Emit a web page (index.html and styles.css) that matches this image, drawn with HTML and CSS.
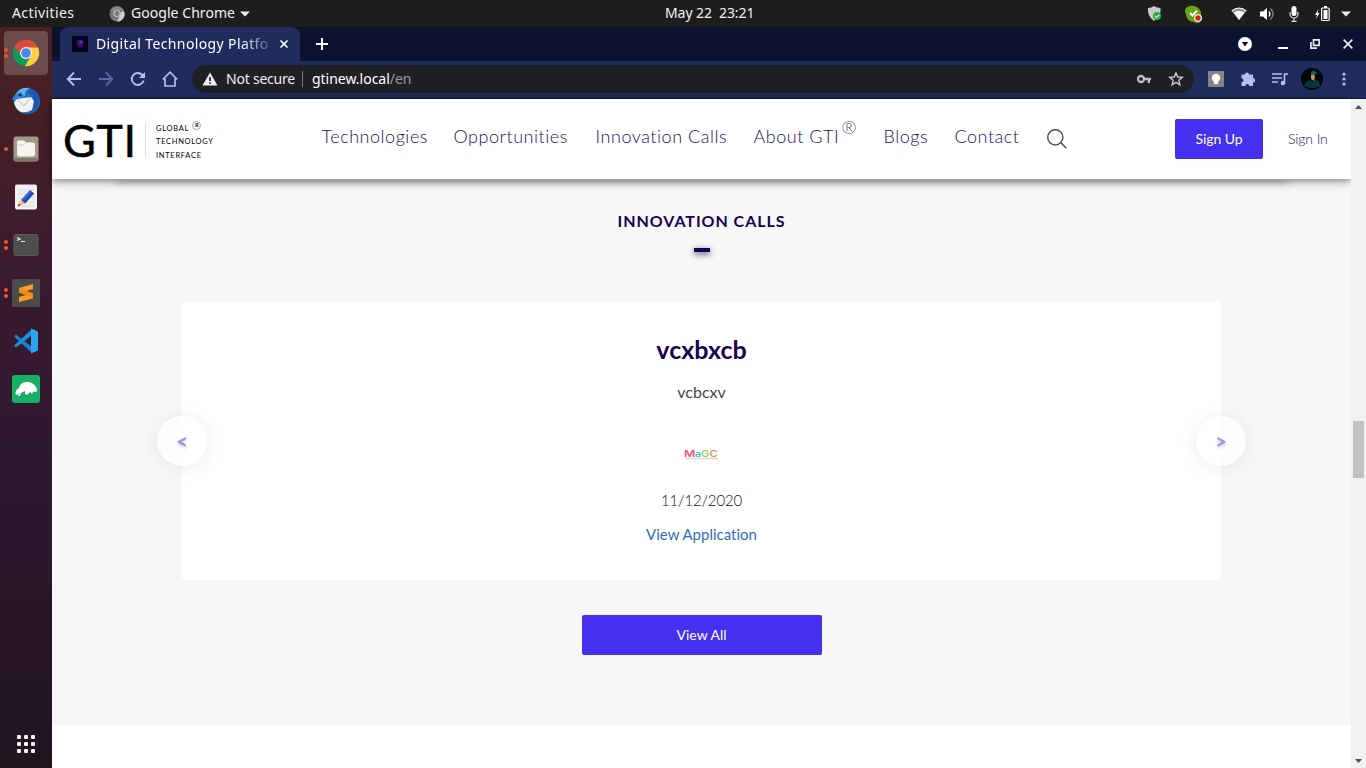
FILE: index.html
```html
<!DOCTYPE html>
<html lang="en">
<head>
<meta charset="utf-8">
<title>Digital Technology Platform</title>
<link rel="stylesheet" href="styles.css">
</head>
<body>
<div class="desktop">
  <header class="topbar">
    <span class="activities">Activities</span>
    <svg class="app-icon" width="16" height="16" viewBox="0 0 16 16"><circle cx="8" cy="8" r="7.500" fill="#777"/><path d="M8 8 15 5A7.500 7.500 0 0 1 8 15.500L11 9z" fill="#d0d0d0"/><path d="M1 5A7.500 7.500 0 0 1 15 5H8z" fill="#858585"/><circle cx="8" cy="7.500" r="3.600" fill="#bbb"/><circle cx="8" cy="7.500" r="2.400" fill="#777"/></svg>
    <span class="app-name">Google Chrome</span>
    <svg class="app-caret" width="10" height="6" viewBox="0 0 10 6"><path d="M0 .5h10L5 5.500z" fill="#eee"/></svg>
    <span class="clock">May 22&nbsp; 23:21</span>
    <div class="tray">
      <svg width="16" height="18" viewBox="0 0 16 18"><path d="M7 1q3 2 6.500 2 1 8-6.500 13Q0 11 1 3q3 0 6-2z" fill="#c9c9c9"/><circle cx="10" cy="11" r="4" fill="#2cae4a"/><path d="m8 11 1.500 1.500L12.300 10" fill="none" stroke="#d6f4dc" stroke-width="1.100"/></svg>
      <svg class="tray-skype" width="18" height="18" viewBox="0 0 18 18"><path d="M5 1q2-.8 4 0a8 8 0 0 1 7 9 5 5 0 0 1-7 7A8 8 0 0 1 1 9a5 5 0 0 1 4-8z" fill="#66a314"/><path d="m5 8 2.500 2.500L12 5.500" fill="none" stroke="#fff" stroke-width="2"/><circle cx="13" cy="13" r="3.800" fill="#fff"/><circle cx="13" cy="13" r="2.700" fill="#e01b24"/></svg>
      <svg class="tray-wifi" width="16" height="14" viewBox="0 0 16 14"><path d="M.5 4Q8-2.500 15.500 4L8 13z" fill="#888"/><path d="M2.500 5.500Q8 2 13.500 5.500L8 13z" fill="#fff"/><path d="M.8 4Q8-2 15.200 4" fill="none" stroke="#fff" stroke-width="1.200"/></svg>
      <svg class="tray-sound" width="16" height="14" viewBox="0 0 16 14"><path d="M1 4.500h3L8 1v12L4 9.500H1z" fill="#fff"/><path d="M10 4.500q2 2.500 0 5" fill="none" stroke="#fff" stroke-width="1.300"/><path d="M11.500 1.500q5 5.500 0 11" fill="none" stroke="#888" stroke-width="1.300"/></svg>
      <svg class="tray-mic" width="10" height="16" viewBox="0 0 10 16"><rect x="2.500" y="0" width="5" height="10" rx="2.500" fill="#fff"/><path d="M1 6v2a4 4 0 0 0 8 0V6M5 12v3M2.500 15.300h5" fill="none" stroke="#ddd" stroke-width="1.200"/></svg>
      <svg class="tray-battery" width="16" height="16" viewBox="0 0 16 16"><path d="M3.500 3 0 9h2l-1 4 3.500-6h-2z" fill="#fff"/><rect x="6.600" y="2" width="7.600" height="12.500" rx="1" fill="none" stroke="#fff" stroke-width="1.200"/><path d="M8.500 4h4v9h-4zM9 0h3v2H9z" fill="#fff"/></svg>
      <svg width="10" height="6" viewBox="0 0 10 6"><path d="M0 .5h10L5 5.500z" fill="#eee"/></svg>
    </div>
  </header>
  <div class="workspace">
    <aside class="dock">
      <div class="dock-item two"><span class="tile active"><svg width="28" height="28" viewBox="0 0 28 28"><circle cx="14" cy="14" r="13.200" fill="#109d58"/><path d="M2.500 7.500A13.200 13.200 0 0 1 26 8.500L14 9l-4 9z" fill="#dd4b3e"/><path d="M14 8.500h12A13.200 13.200 0 0 1 13 27.200L20 15z" fill="#ffce44"/><circle cx="14" cy="14" r="6" fill="#f4f7fb"/><circle cx="14" cy="14" r="4.800" fill="#4a87ee"/></svg></span></div>
      <div class="dock-item"><span class="tile"><svg width="30" height="30" viewBox="0 0 30 30"><circle cx="16" cy="15" r="13" fill="#1f6fc4"/><path d="M4 9Q9 0 19 2q-6 2-5 8z" fill="#65b7ee"/><path d="M1 14Q3 7 10 6l4 5-7 4z" fill="#2985d8"/><path d="M20 3q10 4 8 13-2 9-11 12 6-5 6-12 0-8-7-9z" fill="#1c57b0"/><path d="m3 16 3-3 14-2 3 4-2 9q-6 3-11 2-6-3-7-10z" fill="#f4f2ee"/><path d="m6 13 7 7 7-9" fill="none" stroke="#bdbcc0"/><circle cx="9" cy="9" r="1.300" fill="#123"/></svg></span></div>
      <div class="dock-item one"><span class="tile"><svg width="28" height="28" viewBox="0 0 28 28"><rect x="1.500" y="1.500" width="25" height="25" rx="2.500" fill="#a39a86"/><path d="M1.500 23h25v1q0 2.500-2.500 2.500H4Q1.500 26.500 1.500 24z" fill="#81796a"/><path d="M5 7q0-1.500 1.500-1.500H12l2 2h7q2 0 2 2v10q0 2-2 2H7q-2 0-2-2z" fill="#f6f4f1"/><path d="M5.500 10h6l2-2" fill="none" stroke="#ccc7bd"/></svg></span></div>
      <div class="dock-item"><span class="tile"><svg width="28" height="28" viewBox="0 0 28 28"><rect x="3" y="1.500" width="22" height="25" rx="2" fill="#f1f1f1"/><path d="M6 7h16M6 11h16M6 15h16M6 19h16M6 23h16" stroke="#dcdcdc"/><path d="m9 17 9-10 4 3.500-9 10z" fill="#2c62d4"/><path d="m11 19 9-10 2 1.500-9 10z" fill="#1f4aa8"/><path d="m5.500 23.500 3.500-6.500 4 3.500z" fill="#efb484"/><path d="M5.500 23.500 7 21l1.500 1z" fill="#222"/></svg></span></div>
      <div class="dock-item two"><span class="tile"><svg width="28" height="28" viewBox="0 0 28 28"><rect x="2" y="3.500" width="24" height="21" rx="2" fill="#4d4d4d" stroke="#5d5d5d"/><path d="m5 6.500 3 1.500-3 1.500" fill="none" stroke="#eee" stroke-width="1.200"/><path d="M9 10.500h4" stroke="#eee"/></svg></span></div>
      <div class="dock-item two"><span class="tile"><svg width="28" height="28" viewBox="0 0 28 28"><rect width="28" height="28" rx="1.500" fill="#4b4b4a"/><path d="m7 9 14-4v5l-7 2.300 7 2.200v5L7 23v-5l7-2-7-2.500z" fill="#ff9c1f"/><path d="m7 9 14 5.500v4L7 13.500z" fill="#f28a19"/></svg></span></div>
      <div class="dock-item"><span class="tile"><svg width="28" height="28" viewBox="0 0 28 28"><path d="m2 9.500 2-2L20 20v6z" fill="#1584d0"/><path d="m2 18.500 2 2L20 8V2z" fill="#1b8fd8"/><path d="m19 1.500 7 3v19l-7 3z" fill="#2ba6ee"/></svg></span></div>
      <div class="dock-item"><span class="tile"><svg width="28" height="28" viewBox="0 0 28 28"><rect width="28" height="28" rx="3" fill="#17ae65"/><path d="M3.500 19Q3 15 7 13q1-6 8-6 6 0 9 5 2 4 0 5-2-1-3 0l-1 2-2-2-3 3-2-1v-3l-4 2-1 3H6l1-3-2 2z" fill="#fff"/></svg></span></div>
      <svg class="apps-grid" width="20" height="20" viewBox="0 0 20 20" fill="#f2f2f2"><rect x="1" y="1" width="4" height="4" rx="1"/><rect x="8" y="1" width="4" height="4" rx="1"/><rect x="15" y="1" width="4" height="4" rx="1"/><rect x="1" y="8" width="4" height="4" rx="1"/><rect x="8" y="8" width="4" height="4" rx="1"/><rect x="15" y="8" width="4" height="4" rx="1"/><rect x="1" y="15" width="4" height="4" rx="1"/><rect x="8" y="15" width="4" height="4" rx="1"/><rect x="15" y="15" width="4" height="4" rx="1"/></svg>
    </aside>
    <main class="browser">
      <div class="tabstrip">
        <div class="tab">
          <svg width="16" height="16" viewBox="0 0 16 16"><rect width="16" height="16" fill="#09001c"/><path d="M5 5q3-3 6 0 2 4-3 7-4-3-3-7z" fill="#30126e"/><circle cx="9" cy="6" r="1.800" fill="#5b25a5"/></svg>
          <span class="tab-title">Digital Technology Platfo</span>
          <svg class="tab-close" width="10" height="10" viewBox="0 0 10 10"><path d="m1.500 1.500 7 7m0-7-7 7" stroke="#fff" stroke-width="1.700"/></svg>
        </div>
        <svg class="new-tab" width="12" height="12" viewBox="0 0 12 12"><path d="M6 0v12M0 6h12" stroke="#fff" stroke-width="2"/></svg>
        <div class="window-controls">
          <svg width="14" height="14" viewBox="0 0 14 14"><circle cx="7" cy="7" r="7" fill="#fff"/><path d="M3.800 5h6.400L7 9.500z" fill="#0b1230"/></svg>
          <svg class="win-min" width="10" height="10" viewBox="0 0 10 10"><path d="M0 9h10" stroke="#fff" stroke-width="2"/></svg>
          <svg class="win-restore" width="10" height="10" viewBox="0 0 10 10" fill="none" stroke="#e8ebf5" stroke-width="1.700"><path d="M3.500.9h5.600v5.400H3.500zM.9 3v6.100H7"/></svg>
          <svg class="win-close" width="10" height="10" viewBox="0 0 10 10"><path d="m.7.700 8.600 8.600m0-8.600L.7 9.300" stroke="#e8ebf5" stroke-width="1.700"/></svg>
        </div>
      </div>
      <div class="toolbar">
        <div class="nav-buttons">
          <svg width="16" height="16" viewBox="0 0 16 16" fill="none" stroke="#b3c1ee" stroke-width="1.800"><path d="M15 8H2M8 1.500 1.700 8 8 14.500"/></svg>
          <svg width="16" height="16" viewBox="0 0 16 16" fill="none" stroke="#586a9f" stroke-width="1.800"><path d="M1 8h13M8 1.500 14.300 8 8 14.500"/></svg>
          <svg width="16" height="16" viewBox="0 0 16 16"><path d="M13.600 9.500A6 6 0 1 1 12.300 4L14 5.700" fill="none" stroke="#b3c1ee" stroke-width="1.900"/><path d="M15 1v6H9z" fill="#b3c1ee"/></svg>
          <svg width="16" height="16" viewBox="0 0 16 16" fill="none" stroke="#b3c1ee" stroke-width="1.700"><path d="M.8 8.500 8 1.200l7.200 7.300M3 7.500V15h10V7.500"/></svg>
        </div>
        <div class="omnibox">
          <svg width="16" height="14" viewBox="0 0 16 14"><path d="M8 .5 15.500 13.500H.5z" fill="#eee"/><path d="M8 5v4M8 10.300v1.500" stroke="#202024" stroke-width="1.700"/></svg>
          <span class="not-secure">Not secure</span>
          <span class="divider"></span>
          <span class="url">gtinew.local<span class="url-path">/en</span></span>
          <div class="omnibox-icons">
            <svg width="16" height="10" viewBox="0 0 16 10"><circle cx="5" cy="5" r="3" fill="none" stroke="#bdbdbd" stroke-width="2.300"/><path d="M8 5h7M12.800 5v4" stroke="#bdbdbd" stroke-width="2.400"/></svg>
            <svg width="16" height="16" viewBox="0 0 16 16"><path d="m8 2 1.800 4 4.500.4-3.400 2.900 1 4.400L8 11.400l-3.900 2.300 1-4.400L1.700 6.400 6.200 6z" fill="none" stroke="#ccc" stroke-width="1.400"/></svg>
          </div>
        </div>
        <div class="extensions">
          <svg width="16" height="16" viewBox="0 0 16 16"><rect width="16" height="16" rx="1" fill="#858585"/><circle cx="8" cy="7" r="4.200" fill="#fff"/><path d="M6 10h4v3H6z" fill="#fff"/></svg>
          <svg width="16" height="16" viewBox="0 0 16 16"><path d="M5 3.500a2 2 0 0 1 4 0h4V7a2.200 2.200 0 0 1 0 4.400V15H9.300a2 2 0 0 0-4 0H1.500v-3.800a2 2 0 0 0 0-4V3.500z" fill="#b3c1ee"/></svg>
          <svg width="16" height="14" viewBox="0 0 16 14"><path d="M0 2h10M0 6h10M0 10h6" stroke="#b3c1ee" stroke-width="1.600"/><path d="M12.500 11V2H16" fill="none" stroke="#b3c1ee" stroke-width="1.600"/><circle cx="11" cy="11" r="2.300" fill="#b3c1ee"/></svg>
          <svg class="avatar" width="22" height="22" viewBox="0 0 22 22"><circle cx="11" cy="11" r="11" fill="#030405"/><path d="M3 18q1-5 6-6l3 2 2-3q5 2 5 7-7 4-16 0z" fill="#07353a"/><path d="m10 7 3-1 1 3-1 4-3-2z" fill="#d98a58"/><path d="M10 6q0-4 4-3l2 3-6 1z" fill="#07666e"/></svg>
          <svg width="4" height="14" viewBox="0 0 4 14" fill="#b3c1ee"><circle cx="2" cy="2" r="1.600"/><circle cx="2" cy="7" r="1.600"/><circle cx="2" cy="12" r="1.600"/></svg>
        </div>
      </div>
      <div class="viewport">
        <div class="page">
          <div class="site-header">
            <div class="logo">
              <span class="logo-main">GTI</span>
              <span class="logo-rule"></span>
              <span class="logo-words"><span>GLOBAL <i class="logo-reg">R</i></span><span>TECHNOLOGY</span><span>INTERFACE</span></span>
            </div>
            <nav class="site-nav">
              <a>Technologies</a><a>Opportunities</a><a>Innovation Calls</a><a>About GTI <sup>®</sup></a><a>Blogs</a><a>Contact</a>
              <svg width="20" height="20" viewBox="0 0 20 20" fill="none" stroke="#4b4b4b" stroke-width="1.400"><circle cx="8.300" cy="8.300" r="7.600"/><path d="m13.800 13.800 5.500 5.500"/></svg>
            </nav>
            <a class="sign-up">Sign Up</a>
            <a class="sign-in">Sign In</a>
          </div>
          <section class="calls">
            <div class="previous-shadow"></div>
            <h2>INNOVATION CALLS</h2>
            <span class="heading-dash"></span>
            <article class="card">
              <h3>vcxbxcb</h3>
              <p class="desc">vcbcxv</p>
              <svg class="magc" width="36" height="12" viewBox="0 0 36 12" font-family="Inter, sans-serif" font-weight="600" font-size="8.500"><text transform="translate(0 7.500) scale(1.450 1)" fill="#e45b75">M</text><text transform="translate(10.800 7.500) scale(1.300 1)" fill="#3fbfdc">a</text><text transform="translate(17 7.500) scale(1.300 1)" fill="#96cf61">G</text><text transform="translate(25.500 7.500) scale(1.300 1)" fill="#f58c52">C</text><path d="M1 9.500h33" stroke="#ded9d9" stroke-width="1.300"/></svg>
              <p class="date">11/12/2020</p>
              <a class="view-app">View Application</a>
              <span class="arrow prev">&lt;</span>
              <span class="arrow next">&gt;</span>
            </article>
            <a class="view-all">View All</a>
          </section>
        </div>
        <div class="scrollbar">
          <svg width="7" height="4" viewBox="0 0 7 4"><path d="M0 4 3.500 0 7 4z" fill="#505050"/></svg>
          <span class="thumb"></span>
          <svg class="down" width="7" height="4" viewBox="0 0 7 4"><path d="M0 0h7L3.500 4z" fill="#505050"/></svg>
        </div>
      </div>
    </main>
  </div>
</div>
</body>
</html>
```
FILE: styles.css
```css
* { box-sizing: border-box; }
body { margin: 0; width: 1366px; height: 768px; overflow: hidden; font-family: "Noto Sans", sans-serif; }
svg { display: block; flex: none; }
h2, h3, p { margin: 0; }
.desktop { height: 768px; display: flex; flex-direction: column; }

.topbar { height: 27px; flex: none; display: flex; align-items: center; background: #1d1d1d; color: #f2f2f2; font-size: 14px; line-height: 19px; white-space: nowrap; }
.topbar span { padding-bottom: 2px; }
.activities { width: 109px; padding-left: 12px; letter-spacing: .4px; }
.app-name { width: 109px; margin-left: 6px; letter-spacing: .05px; }
.clock { margin-left: 415px; width: 90px; letter-spacing: -.08px; }
.tray { margin-left: 392px; display: flex; align-items: center; }
.tray-skype { margin-left: 22px; }
.tray-wifi { margin-left: 28px; }
.tray-sound { margin-left: 12px; }
.tray-mic { margin-left: 14px; }
.tray-battery { margin: 0 10px 0 16px; }

.workspace { flex: 1; display: flex; min-height: 0; }
.dock { width: 52px; flex: none; display: flex; flex-direction: column; padding-top: 2px; background: linear-gradient(#4b2022 0%, #421d2a 20%, #38192f 36%, #2f1930 56%, #251526 85%, #21141e 100%); }
.dock-item { position: relative; height: 48px; flex: none; display: grid; place-items: center; }
.tile { width: 44px; height: 44px; border-radius: 4px; display: grid; place-items: center; }
.tile.active { background: #6d4c4e; }
.dock-item::before { content: ""; position: absolute; left: 4px; width: 4px; height: 4px; border-radius: 50%; }
.one::before { background: #ec5527; }
.two::before { background: #ec5527; top: 19px; box-shadow: 0 6px #ec5527; }
.apps-grid { margin: auto auto 14px; }

.browser { flex: 1; min-width: 0; display: flex; flex-direction: column; }
.tabstrip { height: 34px; flex: none; display: flex; align-items: center; padding-left: 8px; background: #0b1230; }
.tab { width: 240px; height: 34px; display: flex; align-items: center; padding-left: 12px; border-radius: 8px 8px 0 0; background: #202b5e; color: #fff; font-size: 14px; line-height: 19px; }
.tab-title { width: 176px; margin-left: 8px; padding-bottom: 2px; white-space: nowrap; letter-spacing: .38px; -webkit-mask-image: linear-gradient(90deg, #000 145px, transparent 180px); mask-image: linear-gradient(90deg, #000 145px, transparent 180px); }
.tab-close { margin-left: 7px; }
.new-tab { margin-left: 16px; }
.window-controls { margin-left: auto; display: flex; align-items: center; padding-right: 13px; }
.win-min { margin-left: 26px; }
.win-restore { margin-left: 22px; }
.win-close { margin-left: 23px; }
.toolbar { height: 38px; flex: none; display: flex; align-items: center; padding: 0 0 2px 14px; background: #202b5e; border-bottom: 1px solid #111a42; }
.nav-buttons { display: flex; gap: 16px; margin-right: 14px; }
.omnibox { width: 1002px; height: 28px; flex: none; display: flex; align-items: center; padding: 0 10px; border-radius: 14px; background: #202024; color: #eee; font-size: 14px; white-space: nowrap; }
.not-secure { width: 76px; margin-left: 8px; letter-spacing: -.22px; }
.divider { width: 1px; height: 16px; background: #77777a; }
.url { margin-left: 9px; letter-spacing: -.02px; color: #fff; }
.url-path { color: #9b9b9e; }
.omnibox-icons { margin-left: auto; display: flex; gap: 16px; align-items: center; }
.extensions { display: flex; align-items: center; gap: 16px; margin-left: 14px; }
.avatar { margin: 0 3px 0 -3px; }

.viewport { flex: 1; min-height: 0; display: flex; background: #fff; }
.page { flex: 1; min-width: 0; font-family: Lato, sans-serif; font-variant-ligatures: none; }
.site-header { position: relative; z-index: 1; height: 80px; display: flex; background: #fff; box-shadow: 0 2px 8px rgba(0,0,0,.5); }
.logo { width: 270px; display: flex; padding: 18px 0 0 11px; color: #000; }
.logo-main { width: 82px; font: 400 45px/46px Lato, sans-serif; letter-spacing: .6px; -webkit-text-stroke: .5px #000; }
.logo-rule { width: 1px; height: 34px; margin-top: 6px; background: #e1e1e1; }
.logo-words { display: flex; flex-direction: column; padding: 4px 0 0 10px; font-size: 7.5px; line-height: 14px; letter-spacing: .7px; }
.logo-words span { height: 14px; }
.logo-reg { display: inline-block; width: 9px; height: 9px; margin-left: 1px; border: 1px solid #aaa; border-radius: 50%; font: 700 5px/7px Lato, sans-serif; letter-spacing: 0; text-align: center; vertical-align: 4px; }
.site-nav { width: 853px; display: grid; grid-template-columns: 132px 142px 158px 130px 71px 92px 20px; padding-top: 25px; color: #261159; font-size: 18px; line-height: 24px; font-weight: 300; letter-spacing: .53px; white-space: nowrap; }
.site-nav a { margin-left: -.5px; }
.site-nav svg { margin-top: 5px; margin-left: -.5px; }
.site-nav sup { position: relative; top: -9px; margin-left: -3px; font-size: 18px; line-height: 0; vertical-align: baseline; opacity: .8; }
.sign-up { width: 88px; height: 40px; margin-top: 20px; border-radius: 2px; background: #4430ee; color: #fff; font-size: 14px; line-height: 40px; letter-spacing: -.1px; text-align: center; }
.sign-in { margin: 20px 0 0 25px; color: #261159; font-size: 14px; line-height: 40px; font-weight: 300; letter-spacing: -.1px; }

.calls { height: 546px; display: flex; flex-direction: column; align-items: center; background: #f7f7f7; }
.previous-shadow { width: 1169px; height: 1px; box-shadow: 0 0 8px 1px rgba(0,0,0,.5); }
.calls h2 { margin-top: 31px; color: #190050; font-size: 16px; line-height: 20px; font-weight: 700; letter-spacing: .95px; }
.heading-dash { width: 16px; height: 4px; margin-top: 17px; background: #190050; box-shadow: 0 2px 6px rgba(25,0,80,.8); }
.card { position: relative; width: 1039px; height: 278px; margin-top: 50px; border-radius: 4px; background: #fff; display: flex; flex-direction: column; align-items: center; }
.card h3 { margin-top: 32px; color: #190050; font-size: 25px; line-height: 30px; font-weight: 700; }
.desc { margin-top: 18px; color: #46464a; font-size: 16px; line-height: 20px; }
.magc { margin-top: 47px; }
.date { margin-top: 29px; color: #111; font-size: 15px; line-height: 20px; font-weight: 300; letter-spacing: -.15px; }
.view-app { margin-top: 14px; color: #326dbb; font-size: 15px; line-height: 20px; }
.arrow { position: absolute; top: 114px; width: 50px; height: 50px; border-radius: 50%; background: rgba(255,255,255,.7); box-shadow: 0 2px 20px rgba(0,0,0,.08); color: #9292e9; font-size: 20px; font-weight: 700; line-height: 51px; text-align: center; text-shadow: 0 2px 3px rgba(0,0,0,.2); }
.prev { left: -25px; }
.next { right: -25px; }
.view-all { width: 240px; height: 40px; margin-top: 35px; border-radius: 2px; background: #4430ee; color: #fff; font-size: 14px; line-height: 40px; text-align: center; }
.scrollbar { position: relative; z-index: 2; width: 15px; display: flex; flex-direction: column; align-items: center; background: #f1f1f1; padding: 6px 0 5px; }
.thumb { width: 11px; height: 57px; margin-top: 312px; background: #c1c1c1; }
.down { margin-top: auto; }
```
